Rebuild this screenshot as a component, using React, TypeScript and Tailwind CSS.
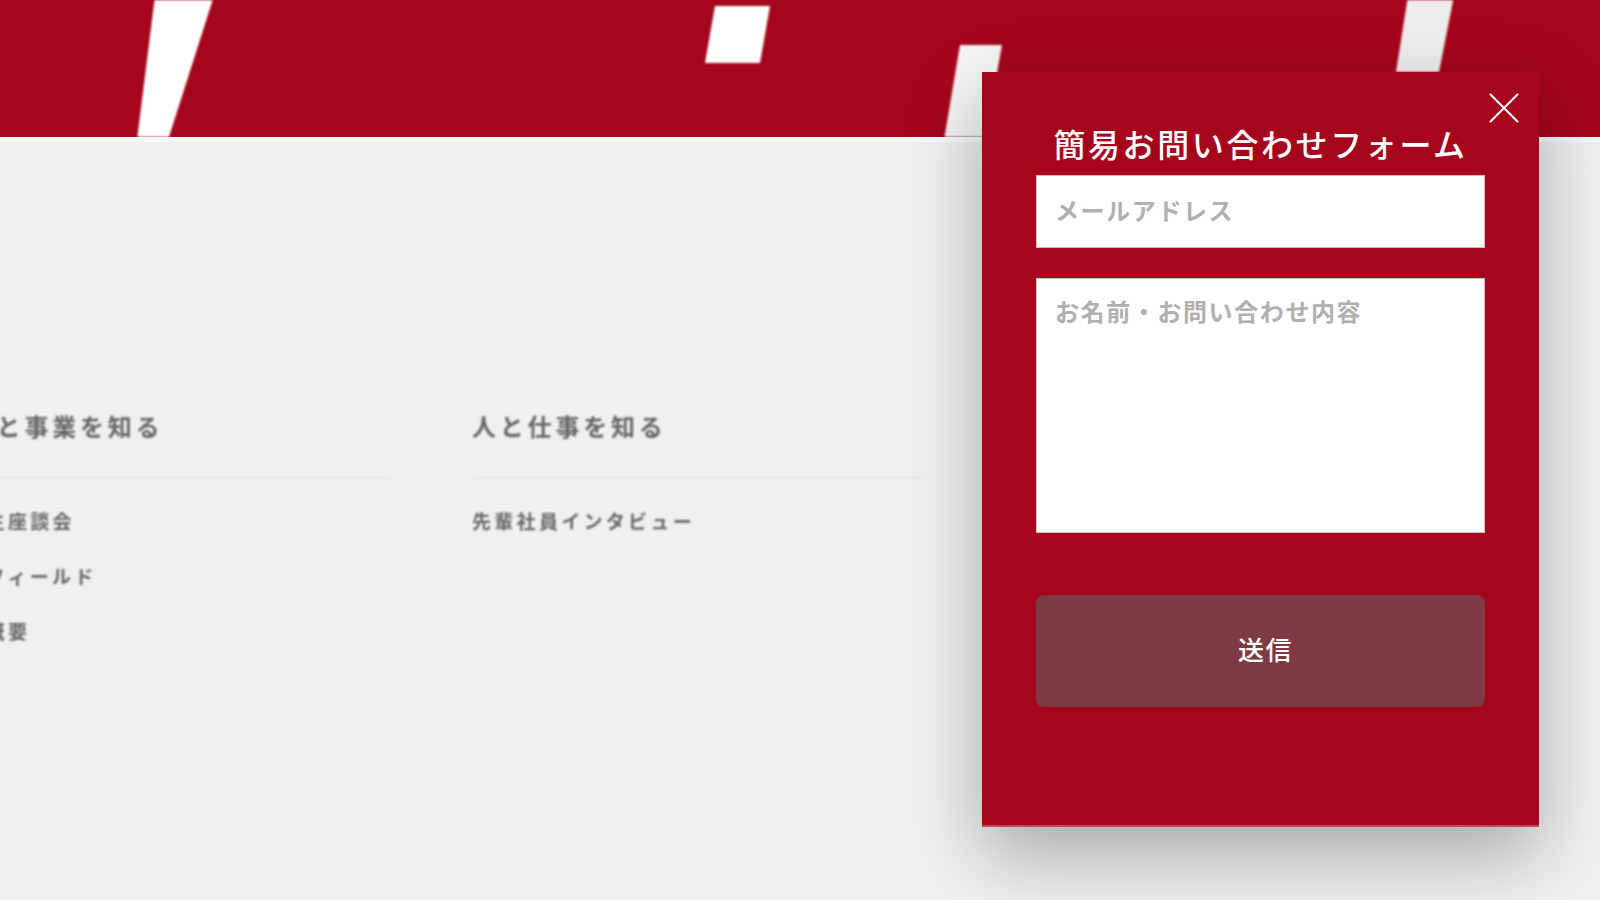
const columns = [
  {
    title: "会社と事業を知る",
    width: "w-[451px]",
    links: ["内定生座談会", "事業フィールド", "会社概要"],
  },
  {
    title: "人と仕事を知る",
    width: "w-[451px]",
    links: ["先輩社員インタビュー"],
  },
];

function Banner() {
  return (
    <div className="h-[142px] w-full overflow-hidden border-b-[5px] border-[#f4fafa] bg-[#a5061d]">
      <svg width="1600" height="137" viewBox="0 0 1600 137" className="block blur-[1.2px]">
        <polygon points="155,-4 214,-4 168,140 137,140" fill="#ffffff" />
        <polygon points="715,6 770,6 760,63 705,63" fill="#ffffff" />
        <polygon points="960,45 1002,45 985,140 944,140" fill="#f4f4f4" />
        <polygon points="1408,-4 1454,-4 1439,72 1396,72" fill="#eeeeee" />
      </svg>
    </div>
  );
}

function FooterColumns() {
  return (
    <div className="ml-[-59px] mt-[267px] flex gap-[80px] blur-[0.9px]">
      {columns.map((col) => (
        <div key={col.title} className={col.width}>
          <h3 className="h-[34px] whitespace-nowrap text-[24px] font-bold leading-[34px] tracking-[3.8px] text-[#666666]">
            {col.title}
          </h3>
          <div className="mt-[34px] h-[2px] bg-[#e6e6e6]" />
          <ul className="mt-[28px] flex flex-col gap-[27px]">
            {col.links.map((link) => (
              <li
                key={link}
                className="h-[28px] whitespace-nowrap text-[19px] font-bold leading-[28px] tracking-[3.3px] text-[#666666]"
              >
                {link}
              </li>
            ))}
          </ul>
        </div>
      ))}
    </div>
  );
}

function ContactPanel() {
  return (
    <div className="absolute left-[982px] top-[72px] flex h-[755px] w-[557px] flex-col border-b-2 border-[#c2485c] bg-[#a5061d] px-[54px] pt-[52px] shadow-[0_28px_70px_rgba(0,0,0,0.3)]">
      <button type="button" aria-label="閉じる" className="absolute left-[507px] top-[21px]">
        <svg width="30" height="30" viewBox="0 0 30 30" className="block">
          <path d="M1 1 L29 29 M29 1 L1 29" stroke="#ffffff" strokeWidth="2" fill="none" />
        </svg>
      </button>
      <h2 className="h-[40px] whitespace-nowrap text-center text-[32px] font-medium leading-[38px] tracking-[2.6px] text-white">
        簡易お問い合わせフォーム
      </h2>
      <input
        type="text"
        placeholder="メールアドレス"
        className="mt-[11px] h-[73px] w-full shrink-0 border border-[#c4c4c4] bg-white px-[18px] pb-[4px] text-[24px] font-bold tracking-[1.6px] outline-none placeholder:text-[#b0b0b0]"
      />
      <textarea
        placeholder="お名前・お問い合わせ内容"
        className="mt-[30px] h-[255px] w-full shrink-0 resize-none border border-[#c4c4c4] bg-white px-[18px] pb-[12px] pt-[14px] text-[24px] font-bold leading-[36px] tracking-[1.6px] outline-none placeholder:text-[#b0b0b0]"
      />
      <button
        type="button"
        className="mt-[62px] h-[112px] w-full shrink-0 rounded-[8px] bg-[#7d3a42] pb-[6px] pl-[10px] text-[26px] font-medium tracking-[1.6px] text-white"
      >
        送信
      </button>
    </div>
  );
}

export default function App() {
  return (
    <div className="relative h-[900px] w-[1600px] overflow-hidden bg-[#f0f0f0] font-['Noto_Sans_CJK_JP','Noto_Sans',sans-serif]">
      <Banner />
      <FooterColumns />
      <ContactPanel />
    </div>
  );
}
